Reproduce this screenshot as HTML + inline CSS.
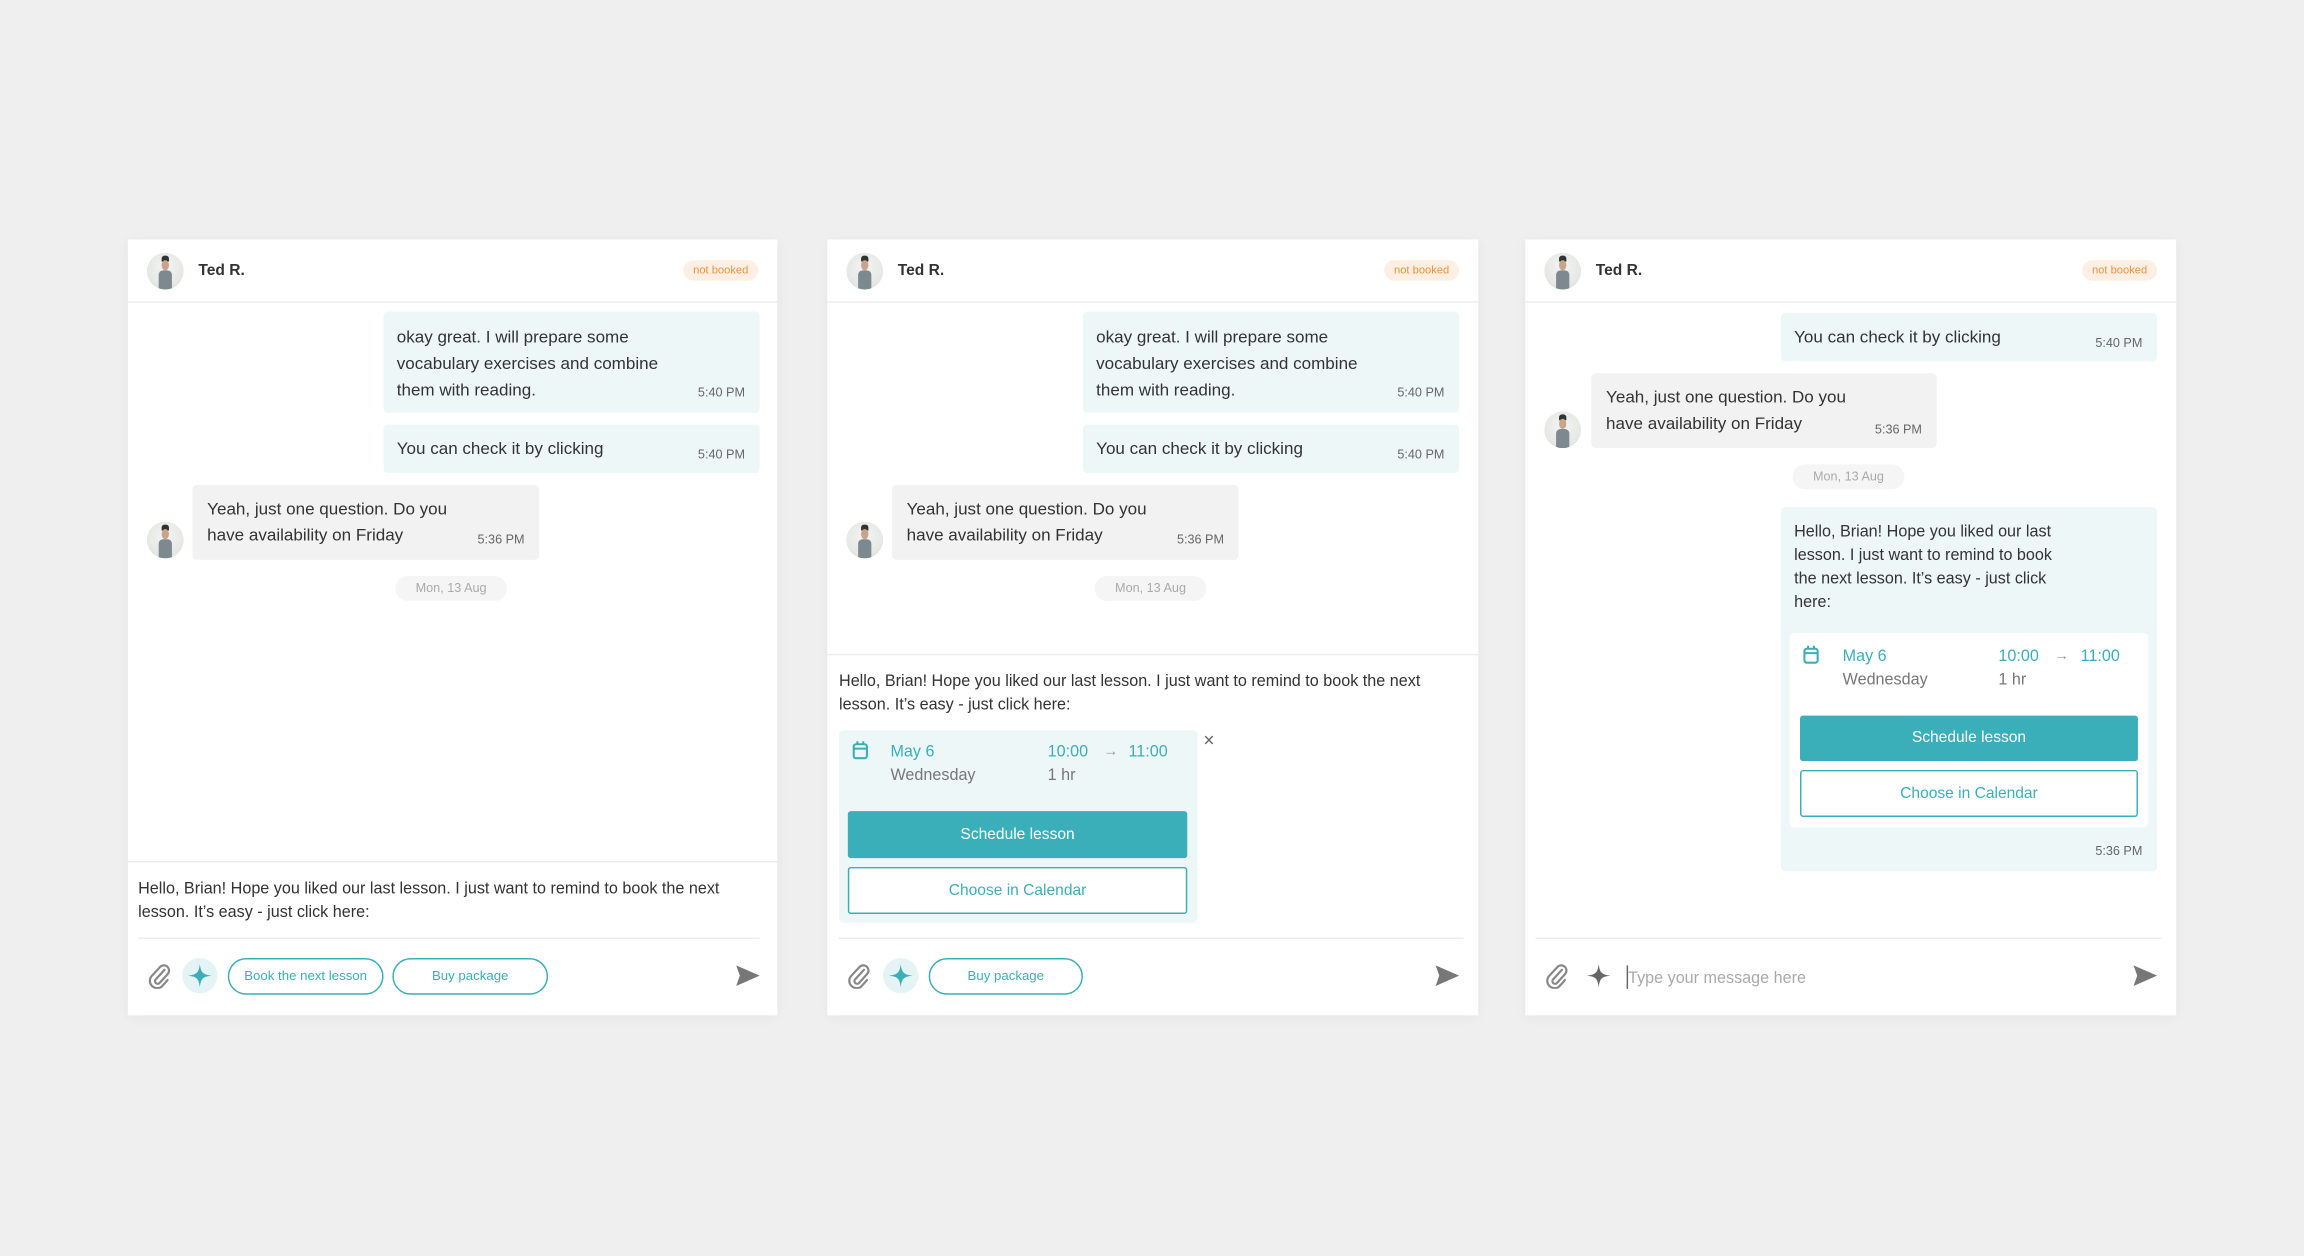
<!DOCTYPE html>
<html><head><meta charset="utf-8"><style>
*{margin:0;padding:0;box-sizing:border-box}
html,body{width:2304px;height:1256px;overflow:hidden;background:#efefef;font-family:"Liberation Sans",sans-serif}
#s{position:absolute;left:0;top:0;width:1568px;height:855px;transform:scale(1.46939);transform-origin:0 0}
.p{position:absolute;top:163px;width:442px;height:528px;background:#fff;box-shadow:0 1px 8px rgba(0,0,0,.05)}
.a{position:absolute}
.t{position:absolute;white-space:nowrap;font-size:11.6px;line-height:18px;color:#333;margin-top:1px}
.tm{position:absolute;white-space:nowrap;font-size:8.6px;line-height:12px;color:#666;margin-top:1px}
.out{position:absolute;background:#eef7f8;border-radius:3px}
.in{position:absolute;background:#f2f2f2;border-radius:3px}
.ln{position:absolute;height:1px;background:#ececec}
.av{position:absolute;width:25px;height:25px;border-radius:50%;background:radial-gradient(circle at 50% 40%,#f4f4f4 0,#e6e9e6 60%,#d9dcd9 100%);overflow:hidden}
.av i{position:absolute;left:10px;top:5px;width:5px;height:7px;border-radius:50%;background:#c9a48a}
.av b{position:absolute;left:8px;top:12px;width:9px;height:13px;border-radius:3px 3px 0 0;background:#7c8a8f}
.av u{position:absolute;left:10px;top:2px;width:5px;height:4px;background:#333;border-radius:2px 2px 0 0}
.nm{position:absolute;left:48px;font-size:10.6px;font-weight:bold;color:#333}
.bd{position:absolute;right:13px;top:14px;width:51px;height:14px;border-radius:7px;background:#fdefe4;color:#f0913a;font-size:7.6px;line-height:14px;text-align:center}
.pill{position:absolute;width:76px;height:17px;border-radius:9px;background:#f5f5f5;color:#aaa;font-size:8.6px;line-height:17px;text-align:center}
.ob{position:absolute;height:25px;border:1px solid #3aafb9;border-radius:13px;color:#3aafb9;font-size:9px;line-height:23px;text-align:center;background:#fff}
.sc{position:absolute;width:24px;height:24px;border-radius:50%;background:#e4f3f4}
.teal{color:#3aafb9}
.gray{color:#777}
.bt1{position:absolute;background:#3aafb9;color:#fff;border-radius:2px;font-size:10.6px;text-align:center;font-weight:500}
.bt2{position:absolute;background:#fff;border:1px solid #3aafb9;color:#3aafb9;border-radius:2px;font-size:10.6px;text-align:center}
</style></head><body><div id="s">

<!-- PANEL 1 -->
<div class="p" style="left:87px">
 <div class="av" style="left:13px;top:9px"><u></u><i></i><b></b></div>
 <div class="nm" style="top:15px">Ted R.</div>
 <div class="bd">not booked</div>
 <div class="ln" style="left:0;right:0;top:42px"></div>
 <div class="out" style="left:174px;top:49px;width:256px;height:69px">
  <div class="t" style="left:9px;top:8px">okay great. I will prepare some</div>
  <div class="t" style="left:9px;top:26px">vocabulary exercises and combine</div>
  <div class="t" style="left:9px;top:44px">them with reading.</div>
  <div class="tm" style="right:10px;top:48px">5:40 PM</div>
 </div>
 <div class="out" style="left:174px;top:126px;width:256px;height:33px">
  <div class="t" style="left:9px;top:7px">You can check it by clicking</div>
  <div class="tm" style="right:10px;top:13px">5:40 PM</div>
 </div>
 <div class="in" style="left:44px;top:167px;width:236px;height:51px">
  <div class="t" style="left:10px;top:7px">Yeah, just one question. Do you</div>
  <div class="t" style="left:10px;top:25px">have availability on Friday</div>
  <div class="tm" style="right:10px;top:30px">5:36 PM</div>
 </div>
 <div class="av" style="left:13px;top:192px"><u></u><i></i><b></b></div>
 <div class="pill" style="left:182px;top:229px">Mon, 13 Aug</div>
 <div class="ln" style="left:0;right:0;top:423px"></div>
 <div class="t" style="left:7px;top:433px;font-size:11px;line-height:16px">Hello, Brian! Hope you liked our last lesson. I just want to remind to book the next</div>
 <div class="t" style="left:7px;top:449px;font-size:11px;line-height:16px">lesson. It’s easy - just click here:</div>
 <div class="ln" style="left:7px;right:12px;top:475px"></div>
 <svg class="a" style="left:13px;top:492px" width="16" height="18" viewBox="0 0 16 18"><path d="M12 5 L6 11.5 a1.8 1.8 0 0 0 2.6 2.5 L14 8 a3.5 3.5 0 0 0 -5 -5 L3 9.5 a5 5 0 0 0 7 7 L14 12" fill="none" stroke="#888" stroke-width="1.5" stroke-linecap="round"/></svg>
 <div class="sc" style="left:37px;top:489px"></div>
 <svg class="a" style="left:40px;top:492px" width="18" height="18" viewBox="-9 -9 18 18"><path d="M0 -8 C0.7 -2 2 -0.7 8 0 C2 0.7 0.7 2 0 8 C-0.7 2 -2 0.7 -8 0 C-2 -0.7 -0.7 -2 0 -8Z" fill="#3aafb9"/></svg>
 <div class="ob" style="left:68px;top:489px;width:106px">Book the next lesson</div>
 <div class="ob" style="left:180px;top:489px;width:106px">Buy package</div>
 <svg class="a" style="left:414px;top:494px" width="16" height="14" viewBox="0 0 16 14"><path d="M0 0 L16 7 L0 14 L2.5 7 Z" fill="#777"/></svg>
</div>

<!-- PANEL 2 -->
<div class="p" style="left:563px;width:443px">
 <div class="av" style="left:13px;top:9px"><u></u><i></i><b></b></div>
 <div class="nm" style="top:15px">Ted R.</div>
 <div class="bd">not booked</div>
 <div class="ln" style="left:0;right:0;top:42px"></div>
 <div class="out" style="left:174px;top:49px;width:256px;height:69px">
  <div class="t" style="left:9px;top:8px">okay great. I will prepare some</div>
  <div class="t" style="left:9px;top:26px">vocabulary exercises and combine</div>
  <div class="t" style="left:9px;top:44px">them with reading.</div>
  <div class="tm" style="right:10px;top:48px">5:40 PM</div>
 </div>
 <div class="out" style="left:174px;top:126px;width:256px;height:33px">
  <div class="t" style="left:9px;top:7px">You can check it by clicking</div>
  <div class="tm" style="right:10px;top:13px">5:40 PM</div>
 </div>
 <div class="in" style="left:44px;top:167px;width:236px;height:51px">
  <div class="t" style="left:10px;top:7px">Yeah, just one question. Do you</div>
  <div class="t" style="left:10px;top:25px">have availability on Friday</div>
  <div class="tm" style="right:10px;top:30px">5:36 PM</div>
 </div>
 <div class="av" style="left:13px;top:192px"><u></u><i></i><b></b></div>
 <div class="pill" style="left:182px;top:229px">Mon, 13 Aug</div>
 <div class="ln" style="left:0;right:0;top:282px"></div>
 <div class="t" style="left:8px;top:292px;font-size:11px;line-height:16px">Hello, Brian! Hope you liked our last lesson. I just want to remind to book the next</div>
 <div class="t" style="left:8px;top:308px;font-size:11px;line-height:16px">lesson. It’s easy - just click here:</div>
 <div class="out" style="left:8px;top:334px;width:244px;height:131px">
  <svg class="a" style="left:9px;top:7px" width="11" height="13" viewBox="0 0 11 13"><rect x="1" y="2.5" width="9" height="9.5" rx="1.5" fill="none" stroke="#3aafb9" stroke-width="1.4"/><path d="M1 5.5 H10 M3.5 0.5 V3 M7.5 0.5 V3" stroke="#3aafb9" stroke-width="1.4"/></svg>
  <div class="t teal" style="left:35px;top:5px;font-size:11px">May 6</div>
  <div class="t gray" style="left:35px;top:21px;font-size:11px">Wednesday</div>
  <div class="t teal" style="left:142px;top:5px;font-size:11px">10:00</div>
  <div class="t" style="left:180px;top:5px;font-size:10px;color:#999">→</div>
  <div class="t teal" style="left:197px;top:5px;font-size:11px">11:00</div>
  <div class="t gray" style="left:142px;top:21px;font-size:11px">1 hr</div>
  <div class="bt1" style="left:6px;top:55px;width:231px;height:32px;line-height:32px">Schedule lesson</div>
  <div class="bt2" style="left:6px;top:93px;width:231px;height:32px;line-height:30px">Choose in Calendar</div>
 </div>
 <div class="t" style="left:256px;top:331px;font-size:13px;color:#666">×</div>
 <div class="ln" style="left:8px;right:10px;top:475px"></div>
 <svg class="a" style="left:13px;top:492px" width="16" height="18" viewBox="0 0 16 18"><path d="M12 5 L6 11.5 a1.8 1.8 0 0 0 2.6 2.5 L14 8 a3.5 3.5 0 0 0 -5 -5 L3 9.5 a5 5 0 0 0 7 7 L14 12" fill="none" stroke="#888" stroke-width="1.5" stroke-linecap="round"/></svg>
 <div class="sc" style="left:38px;top:489px"></div>
 <svg class="a" style="left:41px;top:492px" width="18" height="18" viewBox="-9 -9 18 18"><path d="M0 -8 C0.7 -2 2 -0.7 8 0 C2 0.7 0.7 2 0 8 C-0.7 2 -2 0.7 -8 0 C-2 -0.7 -0.7 -2 0 -8Z" fill="#3aafb9"/></svg>
 <div class="ob" style="left:69px;top:489px;width:105px">Buy package</div>
 <svg class="a" style="left:414px;top:494px" width="16" height="14" viewBox="0 0 16 14"><path d="M0 0 L16 7 L0 14 L2.5 7 Z" fill="#777"/></svg>
</div>

<!-- PANEL 3 -->
<div class="p" style="left:1038px;width:443px">
 <div class="av" style="left:13px;top:9px"><u></u><i></i><b></b></div>
 <div class="nm" style="top:15px">Ted R.</div>
 <div class="bd">not booked</div>
 <div class="ln" style="left:0;right:0;top:42px"></div>
 <div class="out" style="left:174px;top:50px;width:256px;height:33px">
  <div class="t" style="left:9px;top:7px">You can check it by clicking</div>
  <div class="tm" style="right:10px;top:13px">5:40 PM</div>
 </div>
 <div class="in" style="left:45px;top:91px;width:235px;height:51px">
  <div class="t" style="left:10px;top:7px">Yeah, just one question. Do you</div>
  <div class="t" style="left:10px;top:25px">have availability on Friday</div>
  <div class="tm" style="right:10px;top:31px">5:36 PM</div>
 </div>
 <div class="av" style="left:13px;top:117px"><u></u><i></i><b></b></div>
 <div class="pill" style="left:182px;top:153px">Mon, 13 Aug</div>
 <div class="out" style="left:174px;top:182px;width:256px;height:248px">
  <div class="t" style="left:9px;top:8px;font-size:11px;line-height:16.3px">Hello, Brian! Hope you liked our last</div>
  <div class="t" style="left:9px;top:24px;font-size:11px;line-height:16.3px">lesson. I just want to remind to book</div>
  <div class="t" style="left:9px;top:40px;font-size:11px;line-height:16.3px">the next lesson. It’s easy - just click</div>
  <div class="t" style="left:9px;top:56px;font-size:11px;line-height:16.3px">here:</div>
  <div class="a" style="left:6px;top:86px;width:244px;height:132px;background:#fff;border-radius:3px">
   <svg class="a" style="left:9px;top:8px" width="11" height="13" viewBox="0 0 11 13"><rect x="1" y="2.5" width="9" height="9.5" rx="1.5" fill="none" stroke="#3aafb9" stroke-width="1.4"/><path d="M1 5.5 H10 M3.5 0.5 V3 M7.5 0.5 V3" stroke="#3aafb9" stroke-width="1.4"/></svg>
   <div class="t teal" style="left:36px;top:6px;font-size:11px">May 6</div>
   <div class="t gray" style="left:36px;top:22px;font-size:11px">Wednesday</div>
   <div class="t teal" style="left:142px;top:6px;font-size:11px">10:00</div>
   <div class="t" style="left:180px;top:6px;font-size:10px;color:#999">→</div>
   <div class="t teal" style="left:198px;top:6px;font-size:11px">11:00</div>
   <div class="t gray" style="left:142px;top:22px;font-size:11px">1 hr</div>
   <div class="bt1" style="left:7px;top:56px;width:230px;height:31px;line-height:31px">Schedule lesson</div>
   <div class="bt2" style="left:7px;top:93px;width:230px;height:32px;line-height:30px">Choose in Calendar</div>
  </div>
  <div class="tm" style="right:10px;top:227px">5:36 PM</div>
 </div>
 <div class="ln" style="left:7px;right:10px;top:475px"></div>
 <svg class="a" style="left:13px;top:492px" width="16" height="18" viewBox="0 0 16 18"><path d="M12 5 L6 11.5 a1.8 1.8 0 0 0 2.6 2.5 L14 8 a3.5 3.5 0 0 0 -5 -5 L3 9.5 a5 5 0 0 0 7 7 L14 12" fill="none" stroke="#888" stroke-width="1.5" stroke-linecap="round"/></svg>
 <svg class="a" style="left:41px;top:492px" width="18" height="18" viewBox="-9 -9 18 18"><path d="M0 -8 C0.7 -2 2 -0.7 8 0 C2 0.7 0.7 2 0 8 C-0.7 2 -2 0.7 -8 0 C-2 -0.7 -0.7 -2 0 -8Z" fill="#666"/></svg>
 <div class="a" style="left:69px;top:494px;width:1px;height:16px;background:#666"></div>
 <div class="t" style="left:70px;top:493px;font-size:11px;color:#aaa">Type your message here</div>
 <svg class="a" style="left:414px;top:494px" width="16" height="14" viewBox="0 0 16 14"><path d="M0 0 L16 7 L0 14 L2.5 7 Z" fill="#777"/></svg>
</div>

</div></body></html>
